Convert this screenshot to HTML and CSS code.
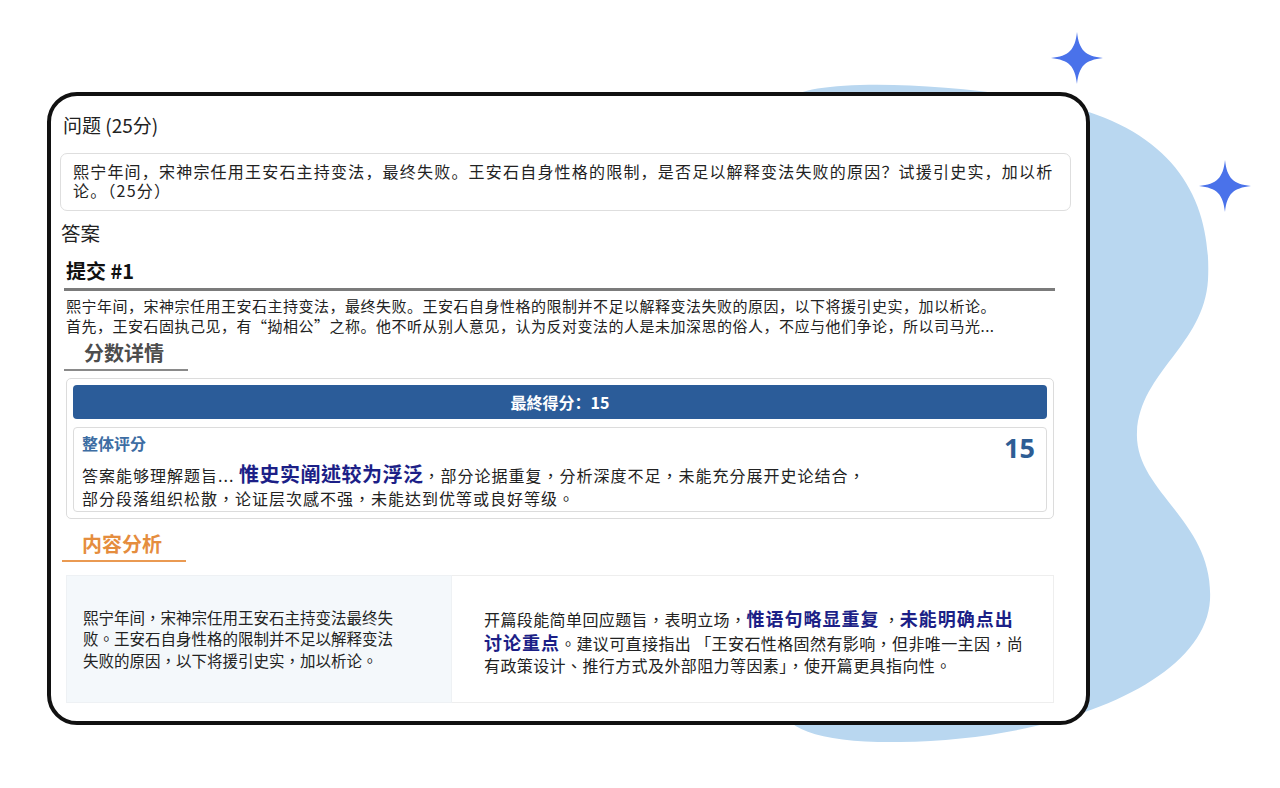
FILE: index.html
```html
<!DOCTYPE html>
<html lang="zh-CN">
<head>
    <meta charset="UTF-8">
    <meta name="viewport" content="width=device-width, initial-scale=1.0">
    <title>作答评分</title>
    <link rel="stylesheet" href="styles.css">
</head>
<body>
    <div class="stage">
        <!-- 背景装饰：色块与星光 -->
        <svg class="backdrop" width="1280" height="788" viewBox="0 0 1280 788" aria-hidden="true">
            <path class="blob" d="M 790 100 C 800 78, 950 80, 1060 104 C 1175 130, 1212 200, 1208 280 C 1204 345, 1140 372, 1137 432 C 1134 492, 1214 520, 1210 600 C 1205 682, 1060 740, 900 742 C 820 743, 780 730, 780 700 Z"/>
            <path class="spark" transform="translate(1077 58)" d="M0 -26 C 2 -8, 8 -2, 26 0 C 8 2, 2 8, 0 26 C -2 8, -8 2, -26 0 C -8 -2, -2 -8, 0 -26 Z"/>
            <path class="spark" transform="translate(1225 186)" d="M0 -26 C 2 -8, 8 -2, 26 0 C 8 2, 2 8, 0 26 C -2 8, -8 2, -26 0 C -8 -2, -2 -8, 0 -26 Z"/>
        </svg>

        <div class="panel">
            <div class="q-title">问题 (25分)</div>
            <div class="q-box">熙宁年间，宋神宗任用王安石主持变法，最终失败。王安石自身性格的限制，是否足以解释变法失败的原因？试援引史实，加以析论。（25分）</div>

            <div class="a-title">答案</div>
            <h2 class="sub-head">提交 #1</h2>
            <p class="answer-text">熙宁年间，宋神宗任用王安石主持变法，最终失败。王安石自身性格的限制并不足以解释变法失败的原因，以下将援引史实，加以析论。<br>首先，王安石固执己见，有“拗相公”之称。他不听从别人意见，认为反对变法的人是未加深思的俗人，不应与他们争论，所以司马光...</p>

            <h3 class="section-head grey">分数详情</h3>
            <div class="score-card">
                <div class="score-bar">最終得分：15</div>
                <div class="score-item" lang="zh-TW">
                    <div class="score-body">
                        <div class="score-label">整体评分</div>
                        <p class="score-text">答案能够理解题旨... <strong class="hl big">惟史实阐述较为浮泛</strong>，部分论据重复，分析深度不足，未能充分展开史论结合，<br>部分段落组织松散，论证层次感不强，未能达到优等或良好等级。</p>
                    </div>
                    <div class="score-num">15</div>
                </div>
            </div>

            <h3 class="section-head orange">内容分析</h3>
            <div class="analysis" lang="zh-TW">
                <div class="analysis-src">熙宁年间，宋神宗任用王安石主持变法最终失<br>败。王安石自身性格的限制并不足以解释变法<br>失败的原因，以下将援引史实，加以析论。</div>
                <div class="analysis-note">开篇段能简单回应题旨，表明立场，<strong class="hl">惟语句略显重复</strong> ，<strong class="hl">未能明确点出</strong><br><strong class="hl">讨论重点</strong>。建议可直接指出 「王安石性格固然有影响，但非唯一主因，尚<br>有政策设计、推行方式及外部阻力等因素」，使开篇更具指向性。</div>
            </div>
        </div>
    </div>
</body>
</html>
```

FILE: styles.css
```css
body {
    margin: 0;
    background-color: #fff;
    color: #222;
    font-family: "Noto Sans CJK SC", "Noto Sans", sans-serif;
}
.stage {
    position: relative;
    width: 1280px;
    height: 788px;
    overflow: hidden;
}
.backdrop {
    position: absolute;
    left: 0;
    top: 0;
}
.blob { fill: #b9d7f0; }
.spark { fill: #4a72ea; }

.panel {
    position: relative;
    z-index: 1;
    margin: 92px 0 0 47px;
    width: 1043px;
    height: 633px;
    box-sizing: border-box;
    border: 4px solid #111;
    border-radius: 30px;
    background-color: #fff;
    padding-top: 16px;
}

.q-title {
    margin-left: 12px;
    font-size: 19px;
    line-height: 26px;
    color: #222;
}
.q-box {
    margin: 15px 0 0 9px;
    width: 1011px;
    box-sizing: border-box;
    padding: 8px 12px 10px;
    border: 1px solid #dedede;
    border-radius: 7px;
    font-size: 16px;
    line-height: 19px;
    letter-spacing: 1.2px;
    color: #222;
}
.a-title {
    margin: 9px 0 0 10px;
    font-size: 19.5px;
    line-height: 26px;
}
.sub-head {
    margin: 12px 0 0 13px;
    width: 991px;
    padding: 0 0 4px 2px;
    box-sizing: border-box;
    border-bottom: 3px solid #7b7b7b;
    font-size: 20px;
    line-height: 26px;
    font-weight: bold;
    color: #111;
}
.answer-text {
    margin: 5px 0 0 15px;
    font-size: 15px;
    line-height: 20px;
    letter-spacing: 0.5px;
    color: #222;
}

.section-head {
    margin: 4px 0 0 13px;
    width: 124px;
    box-sizing: border-box;
    padding: 0 0 3px 20px;
    font-size: 20px;
    line-height: 26px;
    font-weight: bold;
}
.section-head.grey {
    color: #4d4d4d;
    border-bottom: 2px solid #8a8a8a;
}
.section-head.orange {
    margin: 12px 0 0 11px;
    color: #e58d3e;
    border-bottom: 2px solid #ea9a52;
}

.score-card {
    margin: 7px 0 0 15px;
    width: 988px;
    box-sizing: border-box;
    padding: 6px;
    border: 1px solid #dcdcdc;
    border-radius: 5px;
}
.score-bar {
    height: 34px;
    line-height: 34px;
    border-radius: 4px;
    background-color: #2b5c99;
    color: #fff;
    text-align: center;
    font-size: 16px;
    font-weight: bold;
}
.score-item {
    display: flex;
    justify-content: space-between;
    align-items: flex-start;
    margin-top: 8px;
    height: 85px;
    box-sizing: border-box;
    padding: 5px 8px 3px;
    border: 1px solid #dcdcdc;
    border-radius: 4px;
    font-family: "Noto Sans CJK TC", "Noto Sans", sans-serif;
}
.score-label {
    font-size: 16px;
    line-height: 20px;
    font-weight: bold;
    color: #3d6da3;
}
.score-text {
    margin: 9px 0 0;
    font-size: 16px;
    line-height: 23px;
    letter-spacing: 1px;
    color: #222;
}
.score-num {
    font-family: "Open Sans", "Noto Sans", sans-serif;
    font-size: 27px;
    line-height: 30px;
    font-weight: bold;
    color: #2e5d94;
    margin-right: 3px;
}

.hl {
    color: #1c1f87;
    font-size: 18px;
    letter-spacing: 1px;
}
.hl.big {
    font-size: 20px;
    letter-spacing: 0.5px;
}

.analysis {
    display: flex;
    margin: 13px 0 0 15px;
    width: 988px;
    height: 128px;
    font-family: "Noto Sans CJK TC", "Noto Sans", sans-serif;
    white-space: nowrap;
}
.analysis-src {
    display: flex;
    align-items: center;
    width: 386px;
    box-sizing: border-box;
    padding: 0 16px;
    background-color: #f4f8fb;
    border: 1px solid #eef1f4;
    font-size: 15.5px;
    line-height: 21.5px;
    color: #222;
}
.analysis-note {
    flex: 1;
    box-sizing: border-box;
    padding: 31px 20px 0 32px;
    border: 1px solid #eeeeee;
    border-left: none;
    font-size: 16px;
    line-height: 22.5px;
    letter-spacing: 0.4px;
    color: #222;
}
```
